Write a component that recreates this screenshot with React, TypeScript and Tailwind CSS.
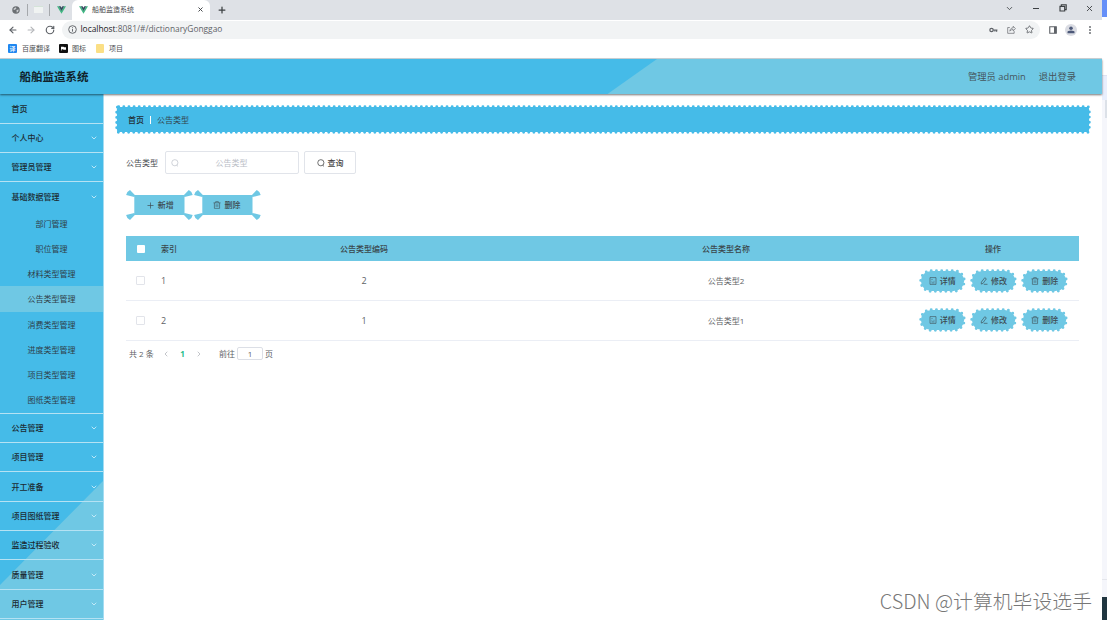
import { useState } from 'react';
import type { ReactNode } from 'react';
import { ArrowLeft, ArrowRight, ChevronDown, ChevronLeft, ChevronRight, Plus, RotateCw, Star, X } from 'lucide-react';

interface MenuGroup {
  title: string;
  leaf?: boolean;
  children?: string[];
}

interface DictRow {
  index: number;
  code: number;
  name: string;
}

const menu: MenuGroup[] = [
  { title: '首页', leaf: true },
  { title: '个人中心' },
  { title: '管理员管理' },
  {
    title: '基础数据管理',
    children: [
      '部门管理',
      '职位管理',
      '材料类型管理',
      '公告类型管理',
      '消费类型管理',
      '进度类型管理',
      '项目类型管理',
      '图纸类型管理',
    ],
  },
  { title: '公告管理' },
  { title: '项目管理' },
  { title: '开工准备' },
  { title: '项目图纸管理' },
  { title: '监造过程验收' },
  { title: '质量管理' },
  { title: '用户管理' },
];

const rows: DictRow[] = [
  { index: 1, code: 2, name: '公告类型2' },
  { index: 2, code: 1, name: '公告类型1' },
];

function VueLogo() {
  return (
    <svg viewBox="0 0 20 17" className="w-[9px] h-2 shrink-0">
      <path d="M0 0h4l6 10 6-10h4L10 17z" fill="#41b883" />
      <path d="M4 0h4l2 3.5L12 0h4l-6 10.5z" fill="#35495e" />
    </svg>
  );
}

function SearchIcon({ className }: { className: string }) {
  return (
    <svg viewBox="0 0 16 16" fill="none" stroke="currentColor" strokeWidth="1.5" className={className}>
      <circle cx="7.7" cy="7.5" r="6.2" />
      <path d="M11.5 12.5l2.5 2.3" />
    </svg>
  );
}

function TrashIcon() {
  return (
    <svg viewBox="0 0 16 16" fill="none" stroke="currentColor" strokeWidth="1.2" className="w-2 h-2">
      <path d="M1 3.7h14M5.3 3.5V1.3h5.4v2.2M2.8 3.7v11h10.4v-11M6.3 6.5v5.3M9.7 6.5v5.3" />
    </svg>
  );
}

function DetailIcon() {
  return (
    <svg viewBox="0 0 16 16" fill="none" stroke="currentColor" strokeWidth="1.2" className="w-2 h-2">
      <path d="M2 1.2h12v13.6H2zM5 5h2M5 8.5h1.5M5 11.8h6M9 8.5h2" />
    </svg>
  );
}

function EditIcon() {
  return (
    <svg viewBox="0 0 16 16" fill="none" stroke="currentColor" strokeWidth="1.3" className="w-2 h-2">
      <path d="M9.5 1.5l3.2 2.2-6.5 9-3.7 1.5.3-4zM7.5 14.6H15" />
    </svg>
  );
}

/** Solid fill with a dotted outline around it */
function DottedFrame({ width, height, radius, fill, gap }: { width: number; height: number; radius: number; fill: string; gap: string }) {
  return (
    <svg width={width} height={height} className="absolute inset-0">
      <rect x="1.9" y="1.9" width={width - 3.8} height={height - 3.8} rx={radius} fill={fill} />
      <rect
        x="1.7"
        y="1.7"
        width={width - 3.4}
        height={height - 3.4}
        rx={radius}
        fill="none"
        stroke={fill}
        strokeWidth="2.9"
        strokeLinecap="round"
        strokeDasharray={gap}
      />
    </svg>
  );
}

function CornerButton({ icon, label }: { icon: ReactNode; label: string }) {
  return (
    <button className="relative w-[67.3px] h-[30px] flex items-center justify-center gap-[3px] text-[8px] text-[#3d4a50]">
      <svg viewBox="0 0 67 30" className="absolute left-[.4px] top-0 w-[67px] h-[30px]" fill="#6fc8e4">
        <rect x="8.3" y="5" width="50.2" height="20" rx="1" />
        <path d="M9.300 5.400L4 0Q.8 1.400.1 5.100l8.200 2zM57.500 5.400L62.800 0q3.200 1.400 3.900 5.100l-8.200 2zM9.300 24.600L4 30Q.8 28.600.1 24.900l8.200-2zM57.500 24.600l5.300 5.400q3.200-1.400 3.900-5.100l-8.200-2z" />
      </svg>
      <span className="relative">{icon}</span>
      <span className="relative font-medium">{label}</span>
    </button>
  );
}

function PillButton({ icon, label }: { icon: ReactNode; label: string }) {
  return (
    <button className="relative w-[47px] h-6 flex items-center justify-center gap-[3px] text-[8px] text-[#3d4a50]">
      <DottedFrame width={47} height={24} radius={10.5} fill="#6fc8e4" gap="0 5.25" />
      <span className="relative">{icon}</span>
      <span className="relative font-medium">{label}</span>
    </button>
  );
}

function BrowserChrome() {
  return (
    <div className="h-[59px] shrink-0 bg-white font-['Open_Sans','Noto_Sans_CJK_SC',sans-serif] text-[#5f6368]">
      {/* Tabs */}
      <div className="h-[19.5px] bg-[#dee1e6] flex items-center">
        <div className="w-[72px] h-full flex items-center pl-3">
          <svg viewBox="0 0 16 16" className="w-2 h-2">
            <circle cx="8" cy="8" r="7.5" fill="#6b6f73" />
            <path d="M3 5.5l4-3 2 2-3 3-2.5.5zM9 8l4.5-1-1 4-3 2.5z" fill="#c9ccd0" />
          </svg>
          <span className="ml-[7px] w-px h-3 bg-[#a5a8ac]" />
          <span className="ml-[6px] w-[9px] h-[7px] bg-[#f0f3f2] border-t border-[#d4e3d8]" />
          <span className="ml-[6px] mr-[7px] w-px h-3 bg-[#a5a8ac]" />
          <VueLogo />
        </div>
        <div className="w-[138px] h-full rounded-t-md bg-white flex items-center pl-[7px] pr-[6px]">
          <VueLogo />
          <span className="ml-[4px] flex-1 text-[7px] leading-none text-[#45484c]">船舶监造系统</span>
          <X className="w-[7px] h-[7px] text-[#3c4043]" strokeWidth={3.2} />
        </div>
        <Plus className="ml-[7px] w-[10px] h-[10px] text-[#3c4043]" strokeWidth={3} />
        <div className="ml-auto mr-[8px] -mt-[3px] flex items-center text-[#3c4043]">
          <ChevronDown className="w-[9px] h-[9px]" strokeWidth={2.2} />
          <span className="ml-[19px] w-[6px] h-px bg-[#3c4043]" />
          <svg viewBox="0 0 12 12" className="ml-[20px] w-2 h-2" fill="none" stroke="currentColor" strokeWidth="1.7">
            <path d="M1.5 3.5h7v7h-7zM3.5 3V1.2h7.3v7.3H9" />
          </svg>
          <X className="ml-[18px] w-[9px] h-[9px]" strokeWidth={2.4} />
        </div>
      </div>
      {/* Address */}
      <div className="h-[20px] flex items-center pl-[7.5px]">
        <ArrowLeft className="w-[10px] h-[10px]" strokeWidth={2.8} />
        <ArrowRight className="ml-2 w-[10px] h-[10px] text-[#b4b6b9]" strokeWidth={2.6} />
        <RotateCw className="ml-[9px] w-[10px] h-[10px]" strokeWidth={2.8} />
        <div className="ml-[7px] w-[978px] h-[18px] rounded-full bg-[#f1f3f4] flex items-center pl-[6px]">
          <svg viewBox="0 0 16 16" className="w-[9px] h-[9px]" fill="none" stroke="currentColor" strokeWidth="1.7">
            <circle cx="8" cy="8" r="6.8" />
            <path d="M8 7.2v4.6M8 4v1.7" />
          </svg>
          <span className="ml-[4px] text-[8.4px] leading-none whitespace-nowrap">
            <span className="text-[#202124]">localhost</span>:8081/#/dictionaryGonggao
          </span>
          <svg viewBox="0 0 16 10" className="ml-auto w-[9px] h-[6px]" fill="none" stroke="currentColor" strokeWidth="2.2">
            <circle cx="4.5" cy="5" r="3" />
            <path d="M7.5 5H15M13.5 5v3M10.5 5v2.5" />
          </svg>
          <svg viewBox="0 0 16 16" className="ml-[9px] w-[9px] h-[9px]" fill="none" stroke="currentColor" strokeWidth="1.2">
            <path d="M5 4.5H1.2v10.3h11.5v-4M5 11c.5-4 2.5-5.8 6-6V2.2L15 6.5l-4 4V8c-2.5 0-4.5.8-6 3z" />
          </svg>
          <Star className="ml-[9px] mr-[6px] w-[9px] h-[9px]" strokeWidth={2.3} />
        </div>
        <svg viewBox="0 0 16 16" className="ml-[9px] w-2 h-2">
          <path d="M1.5 1.5h13v13h-13z" fill="none" stroke="#5f6368" strokeWidth="2.2" />
          <path d="M10 1.5h5v13h-5z" fill="#5f6368" />
        </svg>
        <span className="ml-[8px] w-3 h-3 rounded-full bg-[#dadce3] flex items-center justify-center">
          <svg viewBox="0 0 16 16" className="w-2 h-2" fill="#4c5878">
            <circle cx="8" cy="4.5" r="3.5" />
            <path d="M1 14.5V12q0-3 7-3t7 3v2.5z" />
          </svg>
        </span>
        <svg viewBox="0 0 4 16" className="ml-[12px] w-[2px] h-2" fill="#5f6368">
          <circle cx="2" cy="2" r="1.8" />
          <circle cx="2" cy="8" r="1.8" />
          <circle cx="2" cy="14" r="1.8" />
        </svg>
      </div>
      {/* Bookmarks */}
      <div className="h-[19.5px] flex items-center pl-2 text-[7px] leading-none text-[#4a4d51] border-b border-[#cfd6da]">
        <span className="w-[9px] h-[9px] rounded-[1px] bg-[#1f87f0] text-white text-[6px] font-medium flex items-center justify-center">译</span>
        <span className="ml-[5px]">百度翻译</span>
        <span className="ml-[9px] w-[9px] h-[9px] rounded-[1px] bg-[#111] flex items-center justify-center">
          <svg viewBox="0 0 10 8" className="w-[7px] h-[5px]" fill="#fff">
            <path d="M1 1h4l1 1h3v4H5L4 5H2v2H1z" />
          </svg>
        </span>
        <span className="ml-[4px]">图标</span>
        <span className="ml-[10px] w-[8px] h-[9px] rounded-[1px] bg-[#fbdf85]" />
        <span className="ml-[5px]">项目</span>
      </div>
    </div>
  );
}

function Sidebar() {
  const [active, setActive] = useState('公告类型管理');

  return (
    <aside className="relative w-[104px] shrink-0 bg-[#45bbe8] border-r border-[#a3dcf2] overflow-hidden text-[8px] leading-none">
      <svg viewBox="0 0 103 526" className="absolute left-0 top-0 w-[103px] h-[526px]">
        <path d="M103 387L0 491v35h103z" fill="#6fc8e4" />
      </svg>
      <nav className="relative pt-[.4px]">
        {menu.map((group) => (
          <div key={group.title} className="border-b border-[#b5e2f3]">
            <div className="h-[28.33px] flex items-center justify-between pl-[11.5px] pr-[5px] font-medium text-[#1c2b33]">
              <span>{group.title}</span>
              {!group.leaf && <ChevronDown className="w-2 h-2 text-[#d3effa]" strokeWidth={2.5} />}
            </div>
            {group.children?.map((item) => (
              <button
                key={item}
                onClick={() => setActive(item)}
                className={`block w-full h-[25.25px] pt-[.5px] text-[#2f4048] ${active === item ? 'bg-[#6fc8e4]' : ''}`}
              >
                {item}
              </button>
            ))}
          </div>
        ))}
      </nav>
    </aside>
  );
}

function DictTable() {
  return (
    <div className="w-[953px] text-[8px] leading-none text-[#606266]">
      <div className="h-[25px] grid grid-cols-[29px_28px_362px_362px_172px] items-center bg-[#6fc8e4] text-center font-medium text-[#3a464b]">
        <span className="justify-self-center w-2 h-2 rounded-[1px] bg-white" />
        <span className="text-left pl-[6px] whitespace-nowrap">索引</span>
        <span>公告类型编码</span>
        <span>公告类型名称</span>
        <span>操作</span>
      </div>
      {rows.map((row) => (
        <div
          key={row.index}
          className="h-[39.8px] grid grid-cols-[29px_28px_362px_362px_172px] items-center text-center border-b border-[#ebeef5]"
        >
          <span className="justify-self-center w-[9px] h-[9px] rounded-[1px] border border-[#e2e4ea]" />
          <span className="text-left pl-[6px] pt-px text-[9px]">{row.index}</span>
          <span className="pt-px text-[9px]">{row.code}</span>
          <span className="pt-px">{row.name}</span>
          <div className="flex justify-center gap-[4.3px] pl-px pt-[.6px]">
            <PillButton icon={<DetailIcon />} label="详情" />
            <PillButton icon={<EditIcon />} label="修改" />
            <PillButton icon={<TrashIcon />} label="删除" />
          </div>
        </div>
      ))}
    </div>
  );
}

export default function App() {
  return (
    <div className="relative w-[1107px] h-[620px] flex overflow-hidden bg-white font-['Open_Sans','Noto_Sans_CJK_SC',sans-serif]">
      <div className="w-[1102px] shrink-0 flex flex-col">
        <BrowserChrome />

        {/* Header */}
        <header className="relative z-10 h-[35px] shrink-0 bg-[#45bbe8] shadow-[0_1px_2px_rgba(0,0,0,0.55)] flex items-center justify-between pl-[19.5px] pr-[26px]">
          <svg viewBox="0 0 495 35" preserveAspectRatio="none" className="absolute right-0 top-0 w-[495px] h-[35px]">
            <path d="M50 0H495v35H.5z" fill="#6fc8e4" />
          </svg>
          <h1 className="text-[11.5px] font-bold text-[#10222b]">船舶监造系统</h1>
          <div className="relative flex gap-[13px] text-[9.3px] text-[#45555c]">
            <span>管理员 admin</span>
            <span>退出登录</span>
          </div>
        </header>

        <div className="flex flex-1 min-h-0">
          <Sidebar />
          <main className="flex-1 pl-[11px] pt-[11px] text-[8px] leading-none">
            {/* Breadcrumb */}
            <div className="relative w-[976px] h-[29px] flex items-center pl-[13px]">
              <DottedFrame width={976} height={29} radius={2} fill="#45bbe8" gap="0 5.13" />
              <span className="relative font-medium text-[#222f36]">首页</span>
              <span className="relative ml-[6px] mr-[6px] w-px h-[8px] bg-white" />
              <span className="relative text-[#33444c]">公告类型</span>
            </div>

            <div className="pl-[11px]">
              {/* Search form */}
              <div className="mt-[17px] flex items-center h-[23px]">
                <span className="text-[#45484d]">公告类型</span>
                <div className="ml-[7px] w-[134px] h-[23px] flex items-center rounded-[2px] border border-[#e1e4ea] pl-[5px]">
                  <SearchIcon className="w-2 h-2 text-[#c0c4cc]" />
                  <input
                    placeholder="公告类型"
                    className="w-[105px] h-full text-center outline-none placeholder-[#b9bdc6]"
                  />
                </div>
                <button className="ml-[5px] w-[52px] h-[23px] flex items-center justify-center gap-[3px] rounded-[2px] border border-[#e1e4ea] text-[#444]">
                  <SearchIcon className="w-2 h-2" />
                  <span className="font-medium">查询</span>
                </button>
              </div>

              <div className="mt-[16px] flex">
                <CornerButton icon={<Plus className="w-[9px] h-[9px]" strokeWidth={1.8} />} label="新增" />
                <CornerButton icon={<TrashIcon />} label="删除" />
              </div>

              <div className="mt-[16px]">
                <DictTable />
              </div>

              {/* Pagination */}
              <div className="mt-[6px] h-[14px] pl-[3px] flex items-center text-[#606266]">
                <span className="w-[33px]">共 2 条</span>
                <ChevronLeft className="w-[8px] h-[8px] text-[#a5a8af]" strokeWidth={2} />
                <span className="w-[25px] text-center font-bold text-[#25bd8a]">1</span>
                <ChevronRight className="w-[8px] h-[8px] text-[#a5a8af]" strokeWidth={2} />
                <span className="ml-[16px]">前往</span>
                <span className="ml-[2px] mr-[2px] w-[26px] h-[13px] flex items-center justify-center rounded-[2px] border border-[#dcdfe6]">1</span>
                <span>页</span>
              </div>
            </div>
          </main>
        </div>
      </div>

      {/* Window edge behind the browser */}
      <div className="flex-1 flex flex-col bg-[#f5f6fb]">
        <div className="h-[17px] bg-[#6690f8]" />
        <div className="h-[59px] bg-white border-b border-[#dfe3f2]" />
        <div className="h-[24px] bg-[#e9effd]" />
        <div className="h-[18px] self-end w-[2px] bg-[#dce1e8]" />
        <div className="h-[462px] border-b border-[#e4e6ec]" />
        <div className="h-[17px]" />
        <div className="flex-1 bg-[#203640]" />
      </div>

      <div className="absolute right-[15px] bottom-[5px] whitespace-nowrap font-['Noto_Sans_CJK_SC',sans-serif] font-light text-[19.85px] leading-[28px] text-[#777]">
        CSDN @计算机毕设选手
      </div>
    </div>
  );
}
